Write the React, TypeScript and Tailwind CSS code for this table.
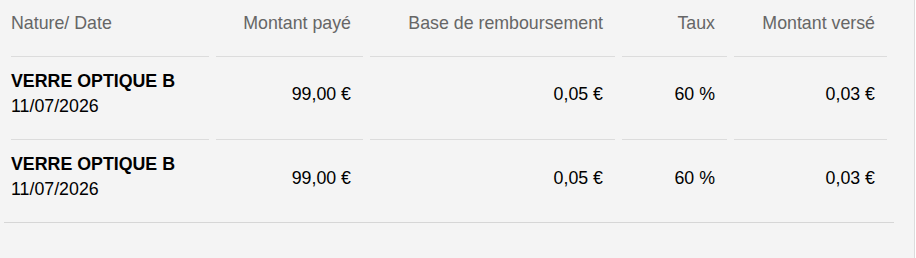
const rows = [
  { nature: 'VERRE OPTIQUE B', date: '11/07/2026', paid: '99,00 €', base: '0,05 €', rate: '60 %', refund: '0,03 €' },
  { nature: 'VERRE OPTIQUE B', date: '11/07/2026', paid: '99,00 €', base: '0,05 €', rate: '60 %', refund: '0,03 €' },
]

const cols = 'grid grid-cols-[198px_147px_245px_105px_153px] gap-x-[7px]'

export default function App() {
  return (
    <div className="w-[915px] h-[258px] bg-[#f4f4f4] border-r border-[#dcdcdc] font-[family-name:'Liberation_Sans',Arial,sans-serif] text-[17.8px] leading-[24.6px]">
      <div className="ml-[4px] w-[890px] px-[7px] pt-[7px] border-b border-[#d6d6d6]">
        <div className={`${cols} text-[#666]`}>
          <div className="h-[50px] pt-[4px] border-b border-[#dcdcdc]">Nature/ Date</div>
          <div className="h-[50px] pt-[4px] pr-3 text-right border-b border-[#dcdcdc]">Montant payé</div>
          <div className="h-[50px] pt-[4px] pr-3 text-right border-b border-[#dcdcdc]">Base de remboursement</div>
          <div className="h-[50px] pt-[4px] pr-3 text-right border-b border-[#dcdcdc]">Taux</div>
          <div className="h-[50px] pt-[4px] pr-3 text-right border-b border-[#dcdcdc]">Montant versé</div>
        </div>
        {rows.map((r, i) => {
          const last = i === rows.length - 1
          const cell = last ? 'h-[75px] pt-[5px] pb-[20px]' : 'h-[76px] pt-[5px] pb-[21px] border-b border-[#dcdcdc]'
          const num = `${cell} pr-3 flex items-center justify-end pt-[7px] text-black`
          return (
            <div key={i} className={`${cols} mt-[7px]`}>
              <div className={`${cell} text-black`}>
                <div className="font-bold">{r.nature}</div>
                <div>{r.date}</div>
              </div>
              <div className={num}>{r.paid}</div>
              <div className={num}>{r.base}</div>
              <div className={num}>{r.rate}</div>
              <div className={num}>{r.refund}</div>
            </div>
          )
        })}
      </div>
    </div>
  )
}
